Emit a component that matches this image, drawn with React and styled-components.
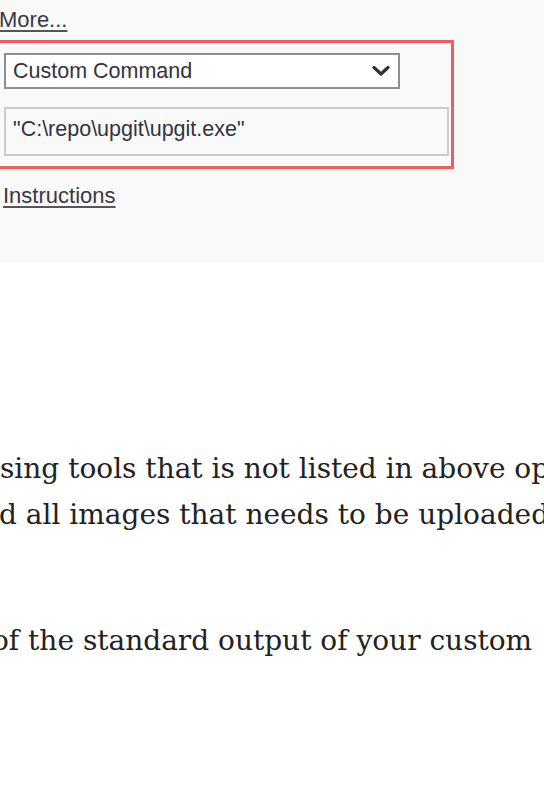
import React from "react";
import styled, { createGlobalStyle } from "styled-components";

const Global = createGlobalStyle`
  html, body { margin: 0; padding: 0; background: #ffffff; overflow: hidden; }
  body { width: 544px; height: 788px; }
`;

const Page = styled.div`
  width: 544px;
  height: 788px;
  overflow: hidden;
  background: #ffffff;
`;

const Shot = styled.section`
  background: #f9f9f9;
  height: 262px;
  box-sizing: border-box;
  padding-top: 7px;
  font-family: "Liberation Sans", Arial, sans-serif;
  color: #333340;
`;

const TextLink = styled.a`
  display: inline-block;
  font-size: 22px;
  line-height: 26px;
  color: #383846;
  text-decoration: underline;
  text-underline-offset: 3px;
  text-decoration-thickness: 2px;
  text-decoration-color: #555;
  margin-left: ${(p) => p.$left}px;
  margin-top: ${(p) => p.$top || 0}px;
`;

const Highlight = styled.div`
  box-sizing: border-box;
  width: 466px;
  margin-left: -12px;
  margin-top: 7px;
  border: 3px solid #ee5b61;
  padding: 10px 0 10px 13px;
  display: flex;
  flex-direction: column;
  gap: 18px;
`;

const Select = styled.div`
  box-sizing: border-box;
  width: 396px;
  height: 36px;
  background: #ffffff;
  border: 2px solid #8e8e8e;
  display: flex;
  align-items: center;
  justify-content: space-between;
  padding: 0 8px 0 7px;
  font-size: 21.5px;
`;

const Field = styled.div`
  box-sizing: border-box;
  width: 445px;
  height: 49px;
  border: 2px solid #cacaca;
  display: flex;
  align-items: center;
  padding: 0 7px 4px;
  font-size: 21.5px;
`;

const Article = styled.article`
  padding-top: 184px;
  font-family: "DejaVu Serif", "Liberation Serif", serif;
  font-size: 28px;
  color: #222222;
`;

const Para = styled.p`
  margin: 0 0 ${(p) => p.$after || 0}px;
  line-height: 46px;
`;

const Line = styled.span`
  display: block;
  white-space: nowrap;
  margin-left: ${(p) => p.$shift}px;
`;

const Chevron = () => (
  <svg width="18" height="12" viewBox="0 0 18 12" aria-hidden="true">
    <path d="M2 2.5 L9 9 L16 2.5" fill="none" stroke="#333" strokeWidth="3.2" strokeLinecap="round" strokeLinejoin="round" />
  </svg>
);

export default function App() {
  return (
    <Page>
      <Global />
      <Shot>
        <TextLink $left={-1}>More...</TextLink>
        <Highlight>
          <Select>
            <span>Custom Command</span>
            <Chevron />
          </Select>
          <Field>"C:\repo\upgit\upgit.exe"</Field>
        </Highlight>
        <TextLink $left={3} $top={14}>Instructions</TextLink>
      </Shot>
      <Article>
        <Para $after={80}>
          <Line $shift={0}>sing tools that is not listed in above op</Line>
          <Line $shift={-1}>d all images that needs to be uploaded</Line>
        </Para>
        <Para>
          <Line $shift={-8}>of the standard output of your custom</Line>
        </Para>
      </Article>
    </Page>
  );
}
